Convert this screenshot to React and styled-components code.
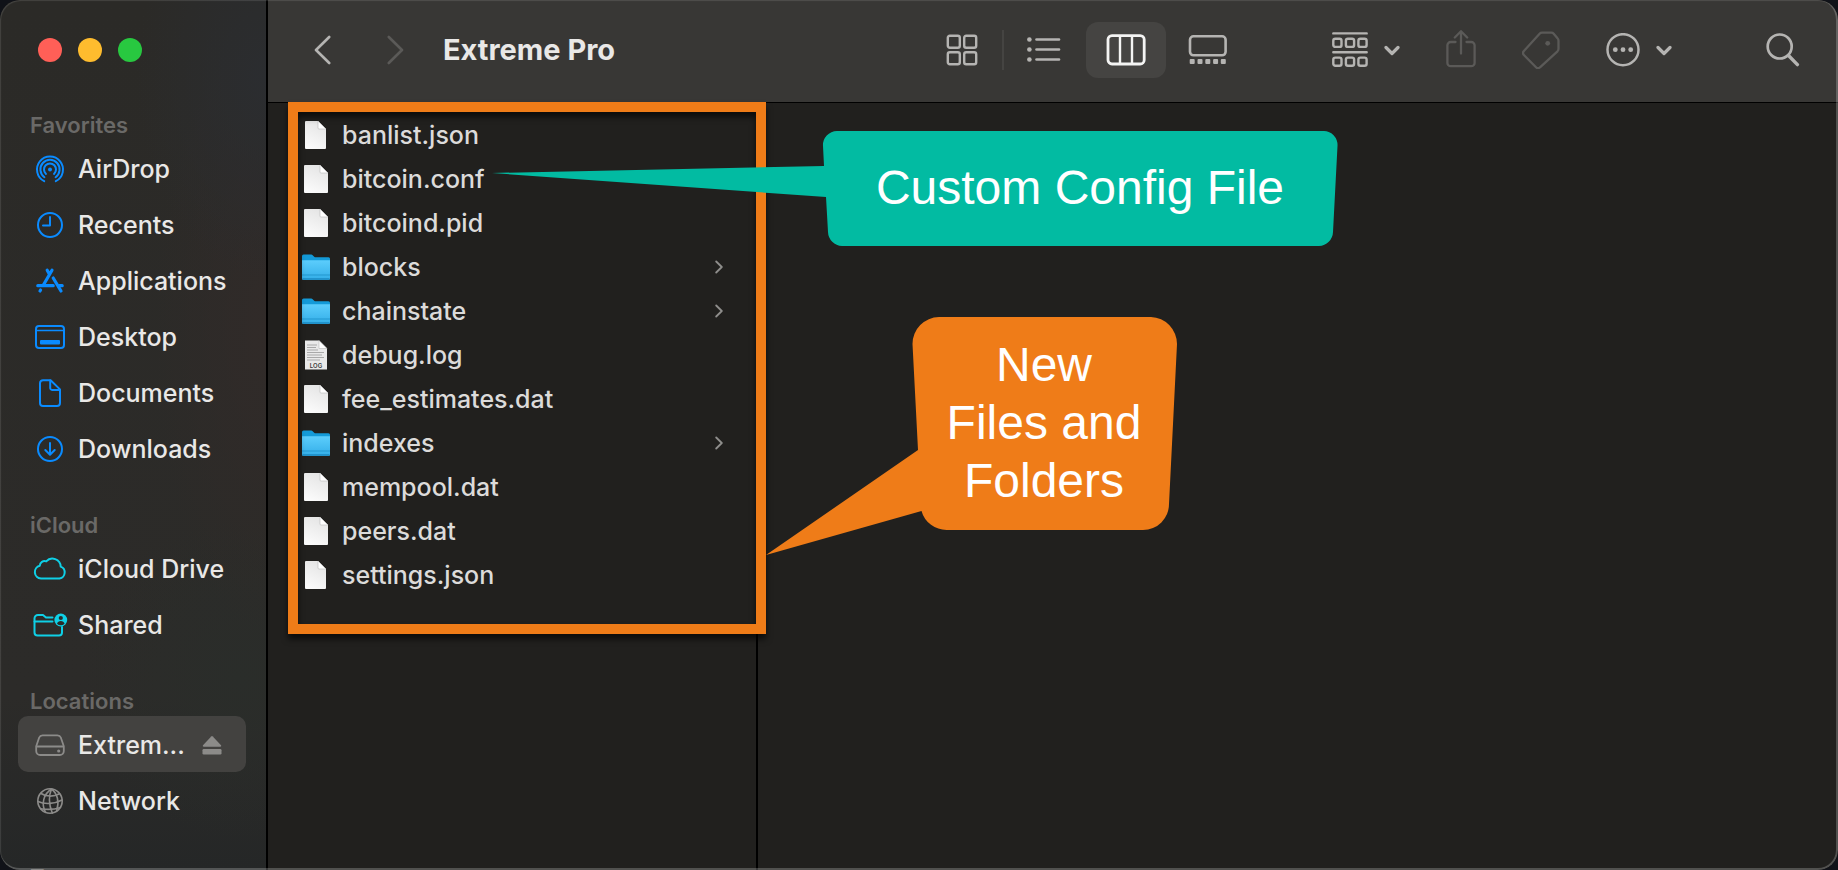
import React from "react";
import styled, { createGlobalStyle } from "styled-components";

const GlobalStyle = createGlobalStyle`
  *, *::before, *::after { box-sizing: border-box; }
  body {
    margin: 0;
    background: #101218;
    font-family: Inter, "Liberation Sans", sans-serif;
    -webkit-font-smoothing: antialiased;
  }
  button { font: inherit; color: inherit; border: 0; padding: 0; background: none; }
`;

/* ---------- window ---------- */

const Window = styled.div`
  position: relative;
  display: flex;
  height: 100vh;
  overflow: hidden;
  border-radius: 20px;
  background: #21201e;

  &::after {
    content: "";
    position: absolute;
    inset: 0;
    border: 2px solid rgba(255, 255, 255, 0.22);
    border-top-width: 0;
    border-left-width: 0;
    border-radius: 20px;
    box-shadow: inset 1px 1px 1px rgba(255, 255, 255, 0.12);
    pointer-events: none;
  }
`;

const Main = styled.main`
  flex: 1;
  min-width: 0;
  display: flex;
  flex-direction: column;
`;

/* ---------- sidebar ---------- */

const Sidebar = styled.aside`
  flex: 0 0 268px;
  padding: 0 20px 0 18px;
  border-right: 2px solid #000;
  overflow: hidden;
  background:
    radial-gradient(ellipse 130px 200px at 100% 9%, #2b2d30, transparent),
    radial-gradient(ellipse 110px 300px at 100% 38%, #312b29, transparent),
    radial-gradient(ellipse 160px 160px at 90% 78%, #2a2d2a, transparent),
    linear-gradient(#2b2a27 0%, #2c2b29 80%, #252727 100%);
`;

const TrafficLights = styled.div`
  display: flex;
  gap: 16px;
  height: 76px;
  padding: 38px 0 0 20px;
`;

const Light = styled.button`
  width: 24px;
  height: 24px;
  border-radius: 50%;
  background: ${(p) => p.$color};
`;

const GroupTitle = styled.h2`
  display: flex;
  align-items: flex-end;
  height: 64px;
  margin: 0;
  padding: 0 0 1px 12px;
  font-size: 22px;
  line-height: 28px;
  font-weight: 600;
  color: #6a6967;
`;

const PlaceList = styled.ul`
  margin: 0;
  padding: 0;
  list-style: none;
`;

const Place = styled.li`
  display: flex;
  align-items: center;
  height: 56px;
  padding: 2px 24px 0 14px;
  border-radius: 10px;
  background: ${(p) => (p.$selected ? "#434240" : "transparent")};
`;

const PlaceLink = styled.a`
  flex: 1;
  min-width: 0;
  display: flex;
  align-items: center;
  gap: 10px;
  color: #e9e8e7;
  font-size: 25px;
  line-height: 32px;
  font-weight: 500;
  text-decoration: none;
  white-space: nowrap;

  svg { flex: none; color: ${(p) => p.$tint}; }
`;

const EjectButton = styled.button`
  display: flex;
  color: #8c8b89;
`;

/* ---------- toolbar ---------- */

const Toolbar = styled.header`
  display: flex;
  align-items: center;
  height: 103px;
  padding: 0 38px 2px 46px;
  border-bottom: 1px solid #000;
  background: #383735;
  color: #b5b4b2;
`;

const Nav = styled.nav`
  display: flex;
  gap: 56px;
`;

const ToolButton = styled.button`
  display: flex;
  align-items: center;
  gap: 16px;
  color: ${(p) => (p.disabled ? "#5b5a58" : "#b5b4b2")};
`;

const FolderTitle = styled.h1`
  flex: 1;
  margin: 0 0 0 39px;
  font-size: 29px;
  line-height: 40px;
  font-weight: 700;
  color: #e9e8e7;
  white-space: nowrap;
`;

const ViewSwitch = styled.div`
  display: flex;
  align-items: center;
  gap: 2px;
`;

const ViewButton = styled.button`
  display: grid;
  place-items: center;
  width: 80px;
  height: 56px;
  border-radius: 12px;
  background: ${(p) => (p.$active ? "#454442" : "transparent")};
  color: ${(p) => (p.$active ? "#f4f4f3" : "#b5b4b2")};
`;

const Divider = styled.span`
  width: 2px;
  height: 40px;
  margin: 0 -2px;
  background: #454442;
`;

const Actions = styled.div`
  display: flex;
  align-items: center;
  gap: 46px;
  margin: 0 94px 0 84px;
`;

/* ---------- file browser ---------- */

const Browser = styled.section`
  position: relative;
  flex: 1;
  min-height: 0;
  display: flex;
`;

const Column = styled.div`
  flex: 0 0 490px;
  padding: 10px 22px 0;
  border-right: 2px solid #000;
`;

const FileList = styled.ul`
  margin: 0;
  padding: 0;
  list-style: none;
`;

const FileRow = styled.li`
  display: flex;
  align-items: center;
  gap: 10px;
  height: 44px;
  padding: 0 11px 0 10px;
  font-size: 25px;
  line-height: 32px;
  font-weight: 500;
  color: #dcdbda;
`;

const FileName = styled.span`
  flex: 1;
`;

const FileIconSlot = styled.span`
  display: flex;
  justify-content: center;
  width: 32px;
`;

const Highlight = styled.div`
  position: absolute;
  top: -1px;
  left: 20px;
  width: 478px;
  height: 532px;
  border: 10px solid #ef7c18;
  filter: drop-shadow(0 5px 3px rgba(0, 0, 0, 0.65));
  pointer-events: none;
`;

const Callout = styled.div`
  position: absolute;
  left: ${(p) => p.$left}px;
  top: ${(p) => p.$top}px;
  width: ${(p) => p.$width}px;
  height: ${(p) => p.$height}px;
  color: ${(p) => p.$color};

  svg { display: block; }
`;

const CalloutText = styled.p`
  position: absolute;
  inset: 0 0 auto auto;
  width: ${(p) => p.$width}px;
  height: ${(p) => p.$height}px;
  margin: 0;
  display: grid;
  place-items: center;
  font-family: "Liberation Sans", Arial, sans-serif;
  font-size: 48px;
  line-height: 58px;
  text-align: center;
  color: #fff;
`;

/* ---------- icons ---------- */

const SideSvg = ({ children }) => (
  <svg width="36" height="36" viewBox="0 0 36 36" fill="none" stroke="currentColor" strokeWidth="2" strokeLinecap="round" strokeLinejoin="round" aria-hidden="true">
    {children}
  </svg>
);

const AirDropIcon = () => (
  <SideSvg>
    <path d="M12.2 30.2a13 13 0 1 1 11.6 0" />
    <path d="M12.4 26.2a9.6 9.6 0 1 1 11.2 0" />
    <path d="M14 22.9a6 6 0 1 1 8 0" />
    <circle cx="18" cy="18.4" r="2" fill="currentColor" stroke="none" />
  </SideSvg>
);

const RecentsIcon = () => (
  <SideSvg>
    <circle cx="18" cy="18" r="12" />
    <path d="M18 10v8.5h-7" />
  </SideSvg>
);

const ApplicationsIcon = () => (
  <SideSvg>
    <g strokeWidth="3.2">
      <path d="M20 7.200 11.400 22M15.200 7.200l2.400 4.200M21.200 15l7.800 13M8.600 27l-.6 1" />
      <path d="M5.800 22.700h15.400M27 22.700h3.200" />
    </g>
  </SideSvg>
);

const DesktopIcon = () => (
  <SideSvg>
    <rect x="4" y="7" width="28" height="22" rx="3" />
    <path d="M4 11.5h28" strokeWidth="1.6" />
    <rect x="8" y="21" width="20" height="4.4" rx="1" fill="currentColor" stroke="none" />
  </SideSvg>
);

const DocumentIcon = () => (
  <SideSvg>
    <path d="M11 5.2h7.600L28 14.400v13.600a3 3 0 0 1-3 3H11a3 3 0 0 1-3-3V8.200a3 3 0 0 1 3-3z" />
    <path d="M18.2 5.500v7.600a1.800 1.800 0 0 0 1.800 1.800h7.600" />
  </SideSvg>
);

const DownloadsIcon = () => (
  <SideSvg>
    <circle cx="18" cy="18" r="12" />
    <path d="M18 12v11.500M13.300 19l4.700 4.700 4.700-4.700" />
  </SideSvg>
);

const CloudIcon = () => (
  <SideSvg>
    <path d="M9 27.500a6.500 6.500 0 0 1-1.200-12.800 4.800 4.800 0 0 1 6.400-4.300 8.300 8.300 0 0 1 14.500 5.200A6.200 6.200 0 0 1 27.500 27.500z" />
  </SideSvg>
);

const SharedIcon = () => (
  <SideSvg>
    <path d="M20.500 10.500h-6.500l-3-2.500h-5a3.500 3.500 0 0 0-3.500 3.500v14a3 3 0 0 0 3 3h21.500a3 3 0 0 0 3-3v-5.500" />
    <path d="M2.500 14.500h18" />
    <circle cx="28.800" cy="13" r="6.400" fill="currentColor" stroke="none" />
    <circle cx="28.800" cy="11" r="2.100" fill="#2c2b29" stroke="none" />
    <path d="M25 16.800c.6-2 2-2.800 3.800-2.800s3.200.8 3.800 2.800a5.400 5.400 0 0 1-7.600 0z" fill="#2c2b29" stroke="none" />
  </SideSvg>
);

const DriveIcon = () => (
  <SideSvg>
    <path d="M10.500 8.300h15c1.600 0 2.700.7 3.300 2.200l3 8.700v4.800a4 4 0 0 1-4 4H8.200a4 4 0 0 1-4-4v-4.800l3-8.700c.6-1.500 1.700-2.200 3.300-2.200z" strokeWidth="1.800" />
    <path d="M4.800 19.500h26.400" strokeWidth="1.800" />
    <circle cx="26.700" cy="24" r="1.600" fill="currentColor" stroke="none" />
  </SideSvg>
);

const NetworkIcon = () => (
  <SideSvg>
    <g strokeWidth="1.600">
      <circle cx="18" cy="18" r="12.200" />
      <path d="M19.500 6C11.500 11 9 21 13.500 29.300M19.500 6c-3 7-2.500 16 .8 24M19.500 6c6 4.500 8 13 5.200 21.600" />
      <path d="M9 10.500c5 3.200 12.500 3.600 18.500.2M6 18.500c6.500 3 17 2.500 24-1.500M8.500 25.700c6 1 13.500 1 20-1.200" />
    </g>
  </SideSvg>
);

const EjectIcon = () => (
  <svg width="20" height="20" viewBox="0 0 20 20" fill="currentColor" aria-hidden="true">
    <path d="M9.200 1.400 1 10.300c-.5.700-.1 1.400.7 1.400h16.600c.8 0 1.200-.7.700-1.400L10.800 1.400a1.100 1.100 0 0 0-1.600 0z" />
    <rect x="0.500" y="14" width="19" height="5.500" rx="1.200" />
  </svg>
);

const Chevron = ({ flip }) => (
  <svg width="17" height="30" viewBox="0 0 17 30" fill="none" stroke="currentColor" strokeWidth="2.600" strokeLinecap="round" strokeLinejoin="round" aria-hidden="true">
    <path d={flip ? "M1.800 2 15 15 1.800 28" : "M15.200 2 2 15l13.200 13"} />
  </svg>
);

const RowChevron = () => (
  <svg width="8" height="14" viewBox="0 0 8 14" fill="none" stroke="#8f8e8c" strokeWidth="1.800" strokeLinecap="round" strokeLinejoin="round" aria-hidden="true">
    <path d="M1.200 1.500 6.800 7l-5.600 5.500" />
  </svg>
);

const DownChevron = () => (
  <svg width="16" height="12" viewBox="0 0 16 12" fill="none" stroke="currentColor" strokeWidth="3.200" strokeLinecap="round" strokeLinejoin="round" aria-hidden="true">
    <path d="M2 3.500 8 9.500l6-6" />
  </svg>
);

const GridIcon = () => (
  <svg width="32" height="32" viewBox="0 0 32 32" fill="none" stroke="currentColor" strokeWidth="2.400" aria-hidden="true">
    {[1.800, 18.200].map((y) => [1.800, 18.200].map((x) => (
      <rect key={`${x}-${y}`} x={x} y={y} width="12" height="12" rx="2" />
    )))}
  </svg>
);

const ListIcon = () => (
  <svg width="34" height="28" viewBox="0 0 34 28" fill="none" stroke="currentColor" strokeWidth="2.600" strokeLinecap="round" aria-hidden="true">
    {[3.500, 13.500, 23.500].map((y) => (
      <g key={y}>
        <circle cx="2.400" cy={y} r="2.300" fill="currentColor" stroke="none" />
        <path d={`M9.500 ${y}h22.500`} />
      </g>
    ))}
  </svg>
);

const ColumnsIcon = () => (
  <svg width="40" height="32" viewBox="0 0 40 32" fill="none" stroke="currentColor" strokeWidth="2.800" aria-hidden="true">
    <rect x="2" y="1.600" width="36.200" height="28.400" rx="4" />
    <path d="M14 2v28M26 2v28" strokeWidth="2.400" />
  </svg>
);

const GalleryIcon = () => (
  <svg width="40" height="32" viewBox="0 0 40 32" fill="none" stroke="currentColor" strokeWidth="2.600" aria-hidden="true">
    <rect x="2" y="2.300" width="35.600" height="19" rx="3.500" />
    {[1.700, 9.500, 17.300, 25.100, 32.800].map((x) => (
      <rect key={x} x={x} y="25" width="5" height="5" rx="1" fill="currentColor" stroke="none" />
    ))}
  </svg>
);

const GroupIcon = () => (
  <svg width="36" height="36" viewBox="0 0 36 36" fill="none" stroke="currentColor" strokeWidth="2.400" strokeLinecap="round" aria-hidden="true">
    <path d="M1.300 1.400h33.400M1.300 20.300h33.400" />
    {[6.700, 25.600].map((y) => [1.300, 13.900, 26.400].map((x) => (
      <rect key={`${x}-${y}`} x={x} y={y} width="8.200" height="8.200" rx="2" />
    )))}
  </svg>
);

const ShareIcon = () => (
  <svg width="30" height="40" viewBox="0 0 30 40" fill="none" stroke="currentColor" strokeWidth="2.300" strokeLinecap="round" strokeLinejoin="round" aria-hidden="true">
    <path d="M9.500 12H4.700a3.300 3.300 0 0 0-3.300 3.300v17.600a3.300 3.300 0 0 0 3.300 3.300h20.600a3.300 3.300 0 0 0 3.300-3.300V15.300a3.300 3.300 0 0 0-3.300-3.300h-4.800" />
    <path d="M15 23.500V1.700M8.800 7.500 15 1.200l6.200 6.300" />
  </svg>
);

const TagIcon = () => (
  <svg width="38" height="38" viewBox="0 0 38 38" fill="none" stroke="currentColor" strokeWidth="2.300" strokeLinejoin="round" aria-hidden="true">
    <path d="M20 1.700h9.300c1 0 1.800.3 2.400 1l3.800 4.600c.7.700 1 1.500 1 2.500v8c0 1-.3 1.800-1 2.500L18 36.300c-1.200 1.200-2.800 1.200-4 0L1.900 24c-1.200-1.200-1.200-2.700 0-4L17.600 2.700c.7-.7 1.400-1 2.400-1z" />
    <circle cx="25.700" cy="12.300" r="2.400" fill="currentColor" stroke="none" />
  </svg>
);

const MoreIcon = () => (
  <svg width="34" height="34" viewBox="0 0 34 34" fill="none" stroke="currentColor" strokeWidth="2.500" aria-hidden="true">
    <circle cx="17" cy="16.700" r="15.500" />
    {[9.300, 17, 24.700].map((x) => (
      <circle key={x} cx={x} cy="16.700" r="2.400" fill="currentColor" stroke="none" />
    ))}
  </svg>
);

const SearchIcon = () => (
  <svg width="34" height="34" viewBox="0 0 34 34" fill="none" stroke="currentColor" strokeLinecap="round" aria-hidden="true">
    <circle cx="13.700" cy="13.500" r="12" strokeWidth="2.700" />
    <path d="M23 23l8.400 8.600" strokeWidth="3.400" />
  </svg>
);

const FileIcon = ({ narrow }) => {
  const l = narrow ? 4 : 3;
  const r = narrow ? 25 : 27;
  return (
    <svg width="30" height="32" viewBox="0 0 30 32" aria-hidden="true">
      <defs>
        <linearGradient id="paper" x1="0.700" y1="0" x2="0.300" y2="1">
          <stop offset="0" stopColor="#e4e4e4" />
          <stop offset="1" stopColor="#fbfbfb" />
        </linearGradient>
      </defs>
      <path d={`M${l + 1} 2H${r - 8}l8 8v19a1 1 0 0 1-1 1H${l + 1}a1 1 0 0 1-1-1V3a1 1 0 0 1 1-1z`} fill="url(#paper)" />
      <path d={`M${r - 8} 2l8 8h-7a1 1 0 0 1-1-1z`} fill="#fff" stroke="#b9b9b9" strokeWidth="0.600" />
    </svg>
  );
};

const LogIcon = () => (
  <svg width="30" height="32" viewBox="0 0 30 32" aria-hidden="true">
    <path d="M4 1.500h14l8 8v21H4z" fill="#e9e9e9" />
    <path d="M6 6h10M6 8.500h9M6 11h11M6 13.500h17M6 16h15M6 18.500h17M6 21h13" stroke="#a9a9a9" strokeWidth="1.200" />
    <path d="M18 1.500l8 8h-8z" fill="#fff" stroke="#b9b9b9" strokeWidth="0.600" />
    <text x="15" y="28.500" textAnchor="middle" fontFamily="Inter, sans-serif" fontSize="6" fontWeight="600" fill="#3a3a3a">LOG</text>
  </svg>
);

const FolderIcon = () => (
  <svg width="30" height="32" viewBox="0 0 30 32" aria-hidden="true">
    <defs>
      <linearGradient id="folder" x1="0" y1="0" x2="0" y2="1">
        <stop offset="0" stopColor="#5ccdfc" />
        <stop offset="1" stopColor="#33aee8" />
      </linearGradient>
    </defs>
    <path d="M1 5a1.500 1.500 0 0 1 1.500-1.500h7.200c1 0 1.500.3 2.200 1l1.300 1.200c.5.500 1 .600 1.600.600h12.700A1.500 1.500 0 0 1 29 7.800V14H1z" fill="#149ad8" />
    <path d="M1 9.300h28v18.200a1.500 1.500 0 0 1-1.500 1.500h-25A1.500 1.500 0 0 1 1 27.500z" fill="url(#folder)" />
    <path d="M1 24h28" stroke="#2397cf" strokeWidth="1" />
    <path d="M1.500 28h27" stroke="#1b8ac2" strokeWidth="1.500" />
  </svg>
);

const fileIcons = {
  file: <FileIcon />,
  json: <FileIcon narrow />,
  log: <LogIcon />,
  folder: <FolderIcon />,
};

/* ---------- data ---------- */

const BLUE = "#0a8bff";
const CYAN = "#0fd0e6";
const GREY = "#8c8b89";

const places = [
  {
    title: "Favorites",
    tint: BLUE,
    items: [
      ["AirDrop", AirDropIcon],
      ["Recents", RecentsIcon],
      ["Applications", ApplicationsIcon],
      ["Desktop", DesktopIcon],
      ["Documents", DocumentIcon],
      ["Downloads", DownloadsIcon],
    ],
  },
  {
    title: "iCloud",
    tint: CYAN,
    items: [
      ["iCloud Drive", CloudIcon],
      ["Shared", SharedIcon],
    ],
  },
  {
    title: "Locations",
    tint: GREY,
    items: [
      ["Extrem...", DriveIcon, true],
      ["Network", NetworkIcon],
    ],
  },
  { title: "Tags", tint: GREY, items: [] },
];

const files = [
  ["banlist.json", "json"],
  ["bitcoin.conf", "file"],
  ["bitcoind.pid", "file"],
  ["blocks", "folder"],
  ["chainstate", "folder"],
  ["debug.log", "log"],
  ["fee_estimates.dat", "file"],
  ["indexes", "folder"],
  ["mempool.dat", "file"],
  ["peers.dat", "file"],
  ["settings.json", "json"],
];

const views = [
  ["Icons", GridIcon],
  ["List", ListIcon],
  ["Columns", ColumnsIcon],
  ["Gallery", GalleryIcon],
];

export default function App() {
  return (
    <>
      <GlobalStyle />
      <Window>
        <Sidebar>
          <TrafficLights>
            <Light $color="#ff5f57" aria-label="Close" />
            <Light $color="#febc2e" aria-label="Minimize" />
            <Light $color="#28c840" aria-label="Zoom" />
          </TrafficLights>
          {places.map((group) => (
            <section key={group.title}>
              <GroupTitle>{group.title}</GroupTitle>
              <PlaceList>
                {group.items.map(([label, Icon, selected]) => (
                  <Place key={label} $selected={selected}>
                    <PlaceLink href="#" $tint={group.tint}>
                      <Icon />
                      {label}
                    </PlaceLink>
                    {selected && (
                      <EjectButton aria-label="Eject">
                        <EjectIcon />
                      </EjectButton>
                    )}
                  </Place>
                ))}
              </PlaceList>
            </section>
          ))}
        </Sidebar>

        <Main>
          <Toolbar>
            <Nav>
              <ToolButton aria-label="Back"><Chevron /></ToolButton>
              <ToolButton aria-label="Forward" disabled><Chevron flip /></ToolButton>
            </Nav>
            <FolderTitle>Extreme Pro</FolderTitle>
            <ViewSwitch>
              {views.map(([label, Icon], i) => (
                <React.Fragment key={label}>
                  {i === 1 && <Divider />}
                  <ViewButton aria-label={label} $active={label === "Columns"}>
                    <Icon />
                  </ViewButton>
                </React.Fragment>
              ))}
            </ViewSwitch>
            <Actions>
              <ToolButton aria-label="Group"><GroupIcon /><DownChevron /></ToolButton>
              <ToolButton aria-label="Share" disabled><ShareIcon /></ToolButton>
              <ToolButton aria-label="Tags" disabled><TagIcon /></ToolButton>
              <ToolButton aria-label="More"><MoreIcon /><DownChevron /></ToolButton>
            </Actions>
            <ToolButton aria-label="Search"><SearchIcon /></ToolButton>
          </Toolbar>

          <Browser>
            <Column>
              <FileList>
                {files.map(([name, kind]) => (
                  <FileRow key={name}>
                    <FileIconSlot>{fileIcons[kind]}</FileIconSlot>
                    <FileName>{name}</FileName>
                    {kind === "folder" && <RowChevron />}
                  </FileRow>
                ))}
              </FileList>
            </Column>

            <Highlight />

            <Callout $left={224} $top={28} $width={846} $height={115} $color="#02bba2">
              <svg width="846" height="115" viewBox="0 0 846 115" fill="currentColor" aria-hidden="true">
                <path d="M345 0H831a14 14 0 0 1 14.500 15L841 101a14.500 14.500 0 0 1-14 14H350a14.500 14.500 0 0 1-14-14L334 66 0 42 332 35 331 15A14 14 0 0 1 345 0z" />
              </svg>
              <CalloutText $width={516} $height={113}>Custom Config File</CalloutText>
            </Callout>

            <Callout $left={498} $top={214} $width={412} $height={239} $color="#ef7c18">
              <svg width="412" height="239" viewBox="0 0 412 239" fill="currentColor" aria-hidden="true">
                <path d="M173 0H385a27 27 0 0 1 26 27L403 187a26 26 0 0 1-26 26H181a26 26 0 0 1-25.500-19L0 238 152 133 146.500 27A27 27 0 0 1 173 0z" />
              </svg>
              <CalloutText $width={268} $height={212}>
                <span>New<br />Files and<br />Folders</span>
              </CalloutText>
            </Callout>
          </Browser>
        </Main>
      </Window>
    </>
  );
}
